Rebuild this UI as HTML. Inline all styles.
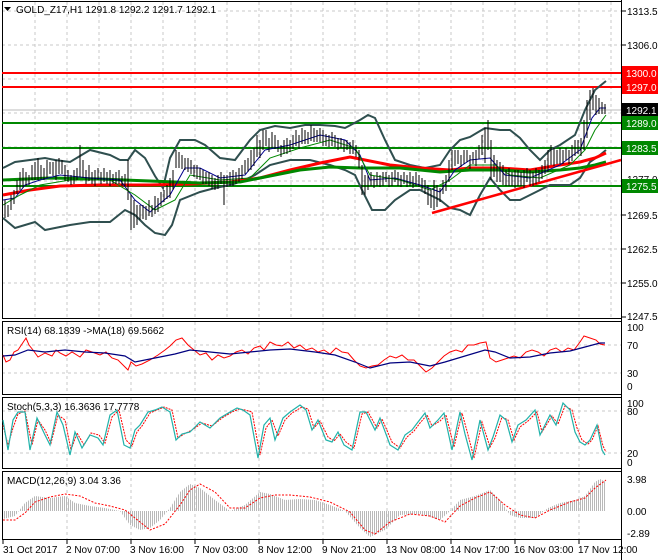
<!DOCTYPE html>
<html><head><meta charset="utf-8"><style>
body{margin:0;width:660px;height:560px;background:#fff;overflow:hidden;font-family:"Liberation Sans",sans-serif}
svg{position:absolute;left:0;top:0}
text{font-family:"Liberation Sans",sans-serif;font-size:10px;fill:#000}
</style></head><body>
<svg width="660" height="560" viewBox="0 0 660 560">
<defs>
<pattern id="hg" width="2" height="10" patternUnits="userSpaceOnUse"><rect width="1" height="10" fill="#b8b8b8"/></pattern>
</defs>
<!-- grids -->
<g stroke="#c8c8c8" stroke-dasharray="3,3" stroke-width="1">
<path d="M35 2V318M67 2V318M99 2V318M131 2V318M163 2V318M195 2V318M227 2V318M259 2V318M291 2V318M323 2V318M355 2V318M387 2V318M419 2V318M451 2V318M483 2V318M515 2V318M547 2V318M579 2V318M611 2V318"/>
<path d="M2 11H621M2 45H621M2 79H621M2 113H621M2 147H621M2 181H621M2 215H621M2 249H621M2 283H621"/>
<path d="M67 322V395M131 322V395M195 322V395M259 322V395M323 322V395M387 322V395M451 322V395M515 322V395M579 322V395M2 345H621M2 373H621"/>
<path d="M67 398V468M131 398V468M195 398V468M259 398V468M323 398V468M387 398V468M451 398V468M515 398V468M579 398V468M2 411H621M2 453H621"/>
<path d="M67 472V539M131 472V539M195 472V539M259 472V539M323 472V539M387 472V539M451 472V539M515 472V539M579 472V539"/>
</g>
<line x1="2" y1="110" x2="621" y2="110" stroke="#bbb"/>
<!-- panel borders -->
<g fill="none" stroke="#000" stroke-width="1">
<rect x="2.5" y="1.5" width="619" height="317"/>
<rect x="2.5" y="321.5" width="619" height="73"/>
<rect x="2.5" y="397.5" width="619" height="71"/>
<rect x="2.5" y="471.5" width="619" height="68"/>
</g>
<!-- horizontal levels -->
<g stroke-width="2">
<line x1="2" y1="73" x2="622" y2="73" stroke="#f00"/>
<line x1="2" y1="87" x2="622" y2="87" stroke="#f00"/>
<line x1="2" y1="123" x2="622" y2="123" stroke="#080"/>
<line x1="2" y1="148" x2="622" y2="148" stroke="#080"/>
<line x1="2" y1="186" x2="622" y2="186" stroke="#080"/>
</g>
<!-- bollinger -->
<g fill="none" stroke="#2f4f4f" stroke-width="2">
<polyline points="3,168 15,162 30,160 45,158 55,160 70,162 90,150 110,155 120,160 128,160 135,150 145,158 155,176 163,188 170,158 180,140 195,140 205,145 220,158 235,160 250,140 260,130 275,126 290,128 305,125 320,125 335,126 345,128 360,120 368,115 375,118 385,140 395,160 410,165 425,168 440,165 450,150 460,140 470,137 485,128 500,130 510,130 520,138 530,150 540,160 550,150 560,145 575,135 585,110 595,90 606,81"/>
<polyline points="3,218 15,228 25,225 35,222 45,230 55,228 70,225 90,222 110,222 125,210 135,215 145,225 155,233 165,235 172,225 180,200 200,192 215,188 230,185 240,182 255,175 270,165 290,160 310,160 330,165 345,170 355,175 362,190 372,210 385,210 395,200 410,190 420,190 430,195 440,200 450,208 460,210 470,215 480,195 490,178 500,190 510,200 520,200 530,195 540,190 550,185 560,185 570,185 580,178 590,162 600,155 606,150"/>
</g>
<!-- MAs -->
<polyline fill="none" stroke="#f00" stroke-width="3" points="3,195 30,190 60,186 100,185 150,185 190,184 230,182 260,178 290,170 320,163 350,157 365,160 390,165 420,168 450,170 470,168 500,168 530,170 560,165 580,162 595,158 606,153"/>
<polyline fill="none" stroke="#080" stroke-width="3" points="3,180 50,178 100,179 150,181 200,183 240,182 270,176 300,170 330,167 360,168 400,168 440,172 470,170 500,170 530,172 560,170 580,168 595,165 606,162"/>
<line x1="432" y1="213" x2="621" y2="160" stroke="#f00" stroke-width="2.5"/>
<!-- thin mas -->
<polyline fill="none" stroke="#00008b" stroke-width="1" points="3,200 15,198 25,185 40,180 60,175 90,178 120,180 135,200 150,212 170,195 185,168 200,168 220,178 245,175 265,150 290,145 320,135 345,140 360,155 370,180 395,178 420,185 440,192 455,170 470,160 490,158 505,175 530,178 560,165 580,150 592,118 600,108 606,108"/>
<polyline fill="none" stroke="#080" stroke-width="1" points="3,205 20,195 40,185 70,180 110,180 135,195 155,210 175,200 190,175 220,180 250,178 270,158 300,148 330,140 355,148 370,175 400,180 430,190 450,180 470,165 495,165 510,175 540,178 570,165 585,150 595,130 606,115"/>
<!-- price bars -->
<g stroke="#000" stroke-width="1">
<path d="M5 200v18M8 205v12M11 195v15M14 190v14M17 180v14M20 172v18M23 168v20M26 172v14M29 175v10M32 165v15M35 162v18M38 158v22M41 165v14M44 168v12M47 160v18M50 162v12M53 162v14M56 160v20M59 158v16M62 160v14M65 165v16M68 170v12M71 175v10M74 170v14M77 168v12M80 145v32M83 160v18M86 170v14M89 165v16M92 172v12M95 170v16M98 168v12M101 172v12M104 168v14M107 172v12M110 170v16M113 174v10M116 172v12M119 170v14M122 176v10M125 174v12M128 160v40M131 195v35M134 200v28M137 205v20M140 205v15M143 205v14M146 206v14M149 200v16M152 205v12M155 196v18M158 198v14M161 192v14M164 190v12M167 185v14M170 178v20M173 170v20M176 150v18M179 152v16M182 155v14M185 158v12M188 158v14M191 160v14M194 165v12M197 165v14M200 168v12M203 170v14M206 172v12M209 172v14M212 175v14M215 178v12M218 175v14M221 172v12M224 175v30M227 175v12M230 172v14M233 170v16M236 172v12M239 168v14M242 165v14M245 160v14M248 158v14M251 150v20M254 148v18M257 135v22M260 140v18M263 130v20M266 130v16M269 138v14M272 132v16M275 135v14M278 140v12M281 145v12M284 140v14M287 138v16M290 140v12M293 135v14M296 130v16M299 135v14M302 128v16M305 130v14M308 132v12M311 125v16M314 128v14M317 130v12M320 128v14M323 130v16M326 134v12M329 135v12M332 132v14M335 135v12M338 138v12M341 138v10M344 140v12M347 140v10M350 142v12M353 140v14M356 145v12M359 150v18M362 165v30M365 175v20M368 175v15M371 172v14M374 176v12M377 172v14M380 175v12M383 172v14M386 172v10M389 175v12M392 172v14M395 170v12M398 172v14M401 175v12M404 172v12M407 175v12M410 172v14M413 176v12M416 172v14M419 175v12M422 178v12M425 180v14M428 185v20M431 190v18M434 180v30M437 185v22M440 188v14M443 180v14M446 175v16M449 160v22M452 150v20M455 150v16M458 150v14M461 155v12M464 150v14M467 150v12M470 155v14M473 152v12M476 150v16M479 145v14M482 135v20M485 128v35M488 120v30M491 140v40M494 155v22M497 160v22M500 162v20M503 165v20M506 170v16M509 168v18M512 172v14M515 170v18M518 170v16M521 172v14M524 170v18M527 168v14M530 170v16M533 172v14M536 168v16M539 170v12M542 165v14M545 160v14M548 150v22M551 145v20M554 148v18M557 150v14M560 148v16M563 150v14M566 148v12M569 150v14M572 145v16M575 140v16M578 140v14M581 138v18M584 120v30M587 100v38M590 90v30M593 88v22M596 95v20M599 98v16M602 102v12M605 104v10"/>
</g>
<!-- right axis -->
<line x1="621.5" y1="0" x2="621.5" y2="560" stroke="#000"/>
<g stroke="#000"><path d="M622 11h4M622 45h4M622 79h4M622 113h4M622 147h4M622 181h4M622 215h4M622 249h4M622 283h4M622 317h4"/></g>
<text x="627" y="15">1313.5</text>
<text x="627" y="49">1306.0</text>
<text x="627" y="219">1269.5</text>
<text x="627" y="253">1262.5</text>
<text x="627" y="287">1255.0</text>
<text x="627" y="320">1247.5</text>
<text x="627" y="183">1277.0</text>
<rect x="622" y="66" width="36" height="14" fill="#f00"/><text x="626" y="77" style="fill:#fff">1300.0</text>
<rect x="622" y="80" width="36" height="14" fill="#f00"/><text x="626" y="91" style="fill:#fff">1297.0</text>
<rect x="622" y="103" width="36" height="14" fill="#000"/><text x="626" y="114" style="fill:#fff">1292.1</text>
<rect x="622" y="116" width="36" height="14" fill="#080"/><text x="626" y="127" style="fill:#fff">1289.0</text>
<rect x="622" y="141" width="36" height="14" fill="#080"/><text x="626" y="152" style="fill:#fff">1283.5</text>
<rect x="622" y="179" width="36" height="14" fill="#080"/><text x="626" y="190" style="fill:#fff">1275.5</text>
<!-- header -->
<path d="M4 7h7l-3.5 4z" fill="#000"/>
<text x="16" y="13">GOLD_Z17,H1  1291.8 1292.2 1291.7 1292.1</text>
<!-- RSI -->
<text x="7" y="334">RSI(14) 68.1839  -&gt;MA(18) 69.5662</text>
<text x="627" y="331">100</text><text x="627" y="349">70</text><text x="627" y="377">30</text><text x="627" y="390">0</text>
<polyline fill="none" stroke="#f00" stroke-width="1" points="3,355 6,362 10,360 14,352 18,350 22,344 26,338 29,345 33,350 38,357 45,353 52,356 56,350 60,353 66,356 72,352 80,357 86,350 92,352 100,355 106,352 112,358 118,360 124,366 128,370 131,362 136,366 142,364 150,360 158,355 165,350 170,346 176,340 182,338 188,345 194,350 200,355 206,353 212,360 218,355 224,358 230,356 236,352 242,350 248,354 254,348 260,346 264,350 270,342 276,345 282,346 288,342 294,348 300,345 306,350 312,348 318,352 324,350 330,354 336,348 342,352 348,353 354,360 360,366 366,368 372,366 378,365 384,360 390,356 396,358 402,355 408,360 414,360 420,366 426,372 432,368 438,362 444,356 450,352 456,350 462,352 468,345 474,345 480,343 486,342 490,358 496,362 502,360 508,358 514,356 520,358 526,352 532,350 538,352 544,356 550,350 556,348 562,352 568,348 574,350 580,342 584,336 590,338 596,340 600,344 605,345"/>
<polyline fill="none" stroke="#00007f" stroke-width="1.2" points="3,356 15,355 28,350 45,352 65,350 85,352 105,353 125,356 135,362 160,357 175,354 190,350 210,352 230,354 250,352 270,350 290,349 315,352 335,355 355,362 370,368 390,363 410,362 430,366 445,362 465,356 485,350 495,352 510,358 530,357 550,353 570,351 585,347 600,343 605,343"/>
<!-- Stoch -->
<text x="7" y="410">Stoch(5,3,3) 16.3636 17.7778</text>
<text x="627" y="407">100</text><text x="627" y="415">80</text><text x="627" y="457">20</text><text x="627" y="466">0</text>
<polyline fill="none" stroke="#f00" stroke-width="1" stroke-dasharray="2,1" points="3,425 8,445 13,428 18,414 25,411 32,445 38,420 45,430 51,443 58,415 65,420 71,450 77,433 84,445 91,433 99,435 105,443 112,417 119,410 126,440 132,446 137,432 142,426 150,413 157,410 164,407 172,410 178,438 184,434 192,430 202,423 212,426 222,418 232,412 239,409 245,410 252,412 260,455 266,428 272,420 278,436 285,420 292,413 302,407 308,409 314,428 320,421 328,437 334,441 340,434 346,442 354,448 362,414 368,412 377,428 382,419 392,442 400,448 407,437 414,431 420,423 427,415 432,426 440,421 446,415 454,447 462,413 467,431 474,458 482,422 490,447 495,438 502,417 508,420 514,440 520,427 528,421 537,412 542,432 552,416 558,424 565,406 572,410 577,428 582,440 588,444 592,440 598,426 603,446 606,452"/>
<polyline fill="none" stroke="#20b2aa" stroke-width="1.2" points="3,420 8,450 13,420 18,412 25,412 30,450 37,418 45,435 50,445 57,412 63,425 70,455 75,432 82,448 90,435 98,438 103,445 110,415 117,410 124,445 130,448 135,430 140,425 148,412 155,410 162,407 170,412 176,440 182,434 190,432 200,422 210,428 220,418 230,412 237,408 243,410 250,415 258,458 264,425 270,418 275,440 283,418 290,412 300,405 306,410 312,430 318,420 326,440 332,442 338,432 344,445 352,450 360,412 366,412 375,430 380,418 390,445 398,450 405,435 412,430 418,422 425,413 430,428 438,420 444,413 452,450 460,412 465,434 472,460 480,420 488,450 493,437 500,415 506,420 512,442 518,425 526,420 535,410 540,435 550,415 556,425 563,403 570,410 575,432 580,442 585,445 590,440 597,425 602,450 605,455"/>
<!-- MACD -->
<text x="7" y="484">MACD(12,26,9) 3.04 3.36</text>
<text x="627" y="483">3.98</text><text x="627" y="515">0.00</text><text x="627" y="537">-2.89</text>
<polygon fill="url(#hg)" points="3,511 3,519 15,516 25,503 35,496 50,498 65,496 75,503 90,506 105,508 120,511 130,525 140,530 150,528 160,520 170,508 180,492 190,484 200,488 215,500 230,511 245,505 260,492 270,494 285,500 300,499 315,500 330,505 345,511 360,528 370,537 385,530 400,515 420,514 440,520 450,511 460,500 475,496 490,490 500,500 510,515 520,518 535,518 548,508 560,503 575,500 585,496 595,482 600,479 606,482 606,511"/>
<polyline fill="none" stroke="#f00" stroke-width="1" stroke-dasharray="2,1.5" points="3,520 15,520 25,513 35,502 50,497 65,494 80,496 95,503 110,506 125,510 140,522 150,530 165,524 180,505 190,490 200,484 215,492 230,508 245,508 260,498 275,495 290,495 310,497 330,502 350,512 365,530 375,534 390,522 410,514 430,516 445,522 460,506 475,498 490,492 505,505 520,515 535,518 550,510 570,502 585,498 595,488 606,480"/>
<!-- time axis -->
<g stroke="#000"><path d="M3 540v4M67 540v4M131 540v4M195 540v4M259 540v4M323 540v4M387 540v4M451 540v4M515 540v4M579 540v4"/></g>
<text x="3" y="553">31 Oct 2017</text>
<text x="66" y="553">2 Nov 07:00</text>
<text x="130" y="553">3 Nov 16:00</text>
<text x="194" y="553">7 Nov 03:00</text>
<text x="258" y="553">8 Nov 12:00</text>
<text x="322" y="553">9 Nov 21:00</text>
<text x="386" y="553">13 Nov 08:00</text>
<text x="450" y="553">14 Nov 17:00</text>
<text x="514" y="553">16 Nov 03:00</text>
<text x="578" y="553">17 Nov 12:00</text>
</svg>
</body></html>
